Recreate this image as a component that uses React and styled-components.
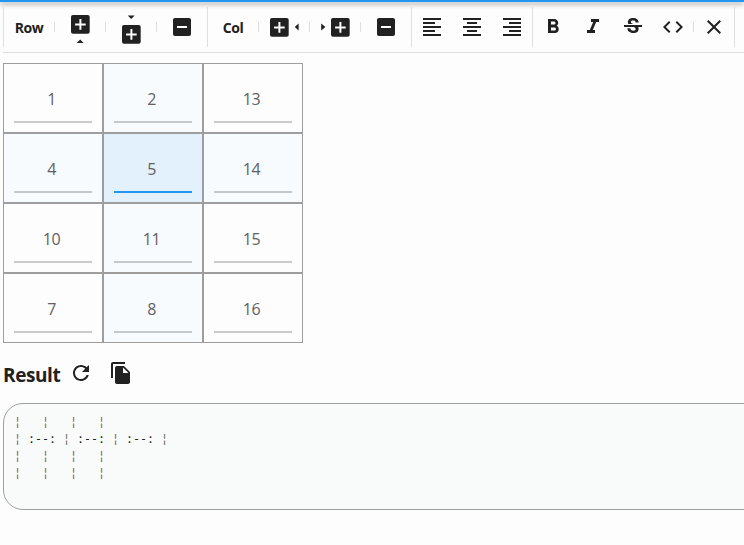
import React from "react";
import styled, { createGlobalStyle } from "styled-components";

const GlobalStyle = createGlobalStyle`
  * { box-sizing: border-box; }
  body {
    margin: 0;
    background: #fdfdfd;
    color: #212121;
    font-family: "Open Sans", "Noto Sans", sans-serif;
    overflow: hidden;
  }
`;

const Page = styled.div`
  height: 545px;
  overflow: hidden;
`;

const TopBar = styled.div`
  height: 2px;
  background: #2196f3;
  box-shadow: 0 2px 5px rgba(0, 0, 0, 0.5);
`;

const Toolbar = styled.div`
  display: flex;
  height: 51px;
  margin-left: 3px;
  padding-top: 5px;
  border-bottom: 1px solid #dedede;
`;

const Group = styled.div`
  display: flex;
  align-items: center;
  height: 40px;
  border-left: 1px solid #dedede;

  &:last-child {
    border-right: 1px solid #dedede;
  }
`;

const Label = styled.div`
  width: 50px;
  text-align: center;
  font-size: 14px;
  font-weight: 700;
  line-height: 40px;
  padding-top: 2px;
  letter-spacing: -0.4px;
`;

const Divider = styled.div`
  width: 1px;
  height: 10px;
  background: #dedede;
`;

const ToolButton = styled.button`
  display: flex;
  align-items: center;
  justify-content: center;
  width: ${(p) => p.$width || 40}px;
  height: 40px;
  padding: 0;
  border: 0;
  background: transparent;
  color: #212121;
`;

const Svg = styled.svg`
  display: block;
  flex: none;
  fill: currentColor;
`;

const Table = styled.div`
  display: grid;
  grid-template-columns: repeat(3, 100px);
  grid-auto-rows: 70px;
  margin: 10px 0 0 3px;
`;

const backgrounds = { none: "#fdfdfd", line: "#f7fbfe", active: "#e3f1fc" };

const Cell = styled.div`
  padding: 10px;
  border: 1px solid #9e9e9e;
  background: ${(p) => backgrounds[p.$tone]};
`;

const CellValue = styled.div`
  height: 49px;
  padding-right: 3px;
  border-bottom: 2px solid ${(p) => (p.$active ? "#2196f3" : "rgba(0, 0, 0, 0.2)")};
  color: #616161;
  font-size: 16px;
  letter-spacing: -0.5px;
  line-height: 50px;
  text-align: center;
`;

const ResultHeader = styled.div`
  display: flex;
  align-items: center;
  height: 40px;
  margin: 10px 0 0 3px;
`;

const Title = styled.h2`
  width: 58px;
  margin: 0;
  padding-top: 4px;
  font-size: 19px;
  font-weight: 700;
  line-height: 40px;
  letter-spacing: -0.4px;
`;

const Output = styled.pre`
  width: 800px;
  height: 107px;
  margin: 10px 0 0 3px;
  padding: 10px;
  border: 1px solid #9e9e9e;
  border-radius: 20px;
  background: #f9fbfa;
  font-family: "DejaVu Sans Mono", monospace;
  font-size: 11.63px;
  line-height: 17px;
`;

const Pipe = styled.span`
  color: #666;
`;

const paths = {
  left: "M15 15H3v2h12v-2zm0-8H3v2h12V7zM3 13h18v-2H3v2zm0 8h18v-2H3v2zM3 3v2h18V3H3z",
  center: "M7 15v2h10v-2H7zm-4 6h18v-2H3v2zm0-8h18v-2H3v2zm4-6v2h10V7H7zM3 3v2h18V3H3z",
  right: "M3 21h18v-2H3v2zm6-4h12v-2H9v2zm-6-4h18v-2H3v2zm6-4h12V7H9v2zM3 3v2h18V3H3z",
  bold: "M15.6 10.79c.97-.67 1.65-1.77 1.65-2.79 0-2.26-1.75-4-4-4H7v14h7.04c2.09 0 3.71-1.7 3.71-3.79 0-1.52-.86-2.82-2.15-3.42zM10 6.5h3c.83 0 1.5.67 1.5 1.5s-.67 1.5-1.5 1.5h-3v-3zm3.5 9H10v-3h3.5c.83 0 1.5.67 1.5 1.5s-.67 1.5-1.5 1.5z",
  italic: "M10 4v3h2.21l-3.42 8H6v3h8v-3h-2.21l3.42-8H18V4z",
  strike: "M7.24 8.75c-.26-.48-.39-1.03-.39-1.67 0-.61.13-1.16.4-1.67.26-.5.63-.93 1.11-1.29.48-.35 1.05-.63 1.7-.83.66-.19 1.39-.29 2.18-.29.81 0 1.54.11 2.21.34.66.22 1.23.54 1.69.94.47.4.83.88 1.08 1.43s.38 1.15.38 1.81h-3.01c0-.31-.05-.59-.15-.85-.09-.27-.24-.49-.44-.68-.2-.19-.45-.33-.75-.44-.3-.1-.66-.16-1.06-.16-.39 0-.74.04-1.03.13s-.53.21-.72.36c-.19.16-.34.34-.44.55-.1.21-.15.43-.15.66 0 .48.25.88.74 1.21.38.25.77.48 1.41.7H7.39c-.05-.08-.11-.17-.15-.25zM21 12v-2H3v2h9.62c.18.07.4.14.55.2.37.17.66.34.87.51s.35.36.43.57c.07.2.11.43.11.69 0 .23-.05.45-.14.66-.09.2-.23.38-.42.53-.19.15-.42.26-.71.35-.29.08-.63.13-1.01.13-.43 0-.83-.04-1.18-.13s-.66-.23-.91-.42c-.25-.19-.45-.44-.59-.75s-.25-.76-.25-1.21H6.4c0 .55.08 1.13.24 1.58s.37.85.65 1.21c.28.35.6.66.98.92.37.26.78.48 1.22.65.44.17.9.3 1.38.39.48.08.96.13 1.44.13.8 0 1.53-.09 2.18-.28s1.21-.45 1.67-.79c.46-.34.82-.77 1.07-1.27s.38-1.07.38-1.71c0-.6-.1-1.14-.31-1.61-.05-.11-.11-.23-.17-.33H21z",
  code: "M9.4 16.6L4.8 12l4.6-4.6L8 6l-6 6 6 6 1.4-1.4zm5.2 0l4.6-4.6-4.6-4.6L16 6l6 6-6 6-1.4-1.4z",
  close: "M19 6.41L17.59 5 12 10.59 6.41 5 5 6.41 10.59 12 5 17.59 6.41 19 12 13.41 17.59 19 19 17.59 13.41 12z",
  remove: "M19 3H5c-1.11 0-2 .9-2 2v14c0 1.1.89 2 2 2h14c1.1 0 2-.9 2-2V5c0-1.1-.9-2-2-2zm-2 10H7v-2h10v2z",
  refresh: "M17.65 6.35C16.2 4.9 14.21 4 12 4c-4.42 0-7.99 3.58-7.99 8s3.57 8 7.99 8c3.73 0 6.84-2.55 7.73-6h-2.08c-.82 2.33-3.04 4-5.65 4-3.31 0-6-2.69-6-6s2.69-6 6-6c1.66 0 3.14.69 4.22 1.78L13 11h7V4l-2.35 2.35z",
  copy: "M16 1H4c-1.1 0-2 .9-2 2v14h2V3h12V1zm-1 4l6 6v10c0 1.1-.9 2-2 2H7.99C6.89 23 6 22.1 6 21l.01-14c0-1.1.89-2 1.99-2h7zm-1 7h5.5L14 6.5V12z",
};

const Icon = ({ name }) => (
  <Svg width="24" height="24" viewBox="0 0 24 24">
    <path d={paths[name]} />
  </Svg>
);

// Position of the plus box and its arrow inside a 50x40 button.
const insertions = {
  above: { x: 16, y: 8, arrow: "M21.8 36L25.2 32.4L28.6 36Z" },
  below: { x: 16, y: 18, arrow: "M21.8 8.4H28.6L25.2 12Z" },
  before: { x: 11, y: 11, arrow: "M39.6 16.6V23.6L35.8 20.1Z" },
  after: { x: 21, y: 11, arrow: "M11.2 16.6V23.6L15.4 20.1Z" },
};

const InsertIcon = ({ place }) => {
  const { x, y, arrow } = insertions[place];
  return (
    <Svg width="50" height="40" viewBox="0 0 50 40">
      <rect x={x} y={y} width="18.7" height="18.7" rx="2" />
      <path
        d={`M${x + 4.1} ${y + 9.4}h10.6M${x + 9.4} ${y + 4.1}v10.6`}
        stroke="#fdfdfd"
        strokeWidth="2"
      />
      <path d={arrow} />
    </Svg>
  );
};

const Tool = ({ name, width }) => (
  <ToolButton $width={width} aria-label={name}>
    <Icon name={name} />
  </ToolButton>
);

const Insert = ({ place }) => (
  <ToolButton $width={50} aria-label={`insert ${place}`}>
    <InsertIcon place={place} />
  </ToolButton>
);

const LineGroup = ({ label, places }) => (
  <Group>
    <Label>{label}</Label>
    {places.map((place) => (
      <React.Fragment key={place}>
        <Divider />
        <Insert place={place} />
      </React.Fragment>
    ))}
    <Divider />
    <Tool name="remove" width={50} />
  </Group>
);

const rows = [
  [1, 2, 13],
  [4, 5, 14],
  [10, 11, 15],
  [7, 8, 16],
];
const active = { row: 1, col: 1 };

const toneOf = (r, c) => {
  if (r === active.row && c === active.col) return "active";
  return r === active.row || c === active.col ? "line" : "none";
};

const output = [
  "¦   ¦   ¦   ¦",
  "¦ :--: ¦ :--: ¦ :--: ¦",
  "¦   ¦   ¦   ¦",
  "¦   ¦   ¦   ¦",
].join("\n");

export default function App() {
  return (
    <Page>
      <GlobalStyle />
      <TopBar />
      <Toolbar>
        <LineGroup label="Row" places={["above", "below"]} />
        <LineGroup label="Col" places={["before", "after"]} />
        <Group>
          <Tool name="left" />
          <Tool name="center" />
          <Tool name="right" />
        </Group>
        <Group>
          <Tool name="bold" />
          <Tool name="italic" />
          <Tool name="strike" />
          <Tool name="code" />
          <Divider />
          <Tool name="close" />
        </Group>
      </Toolbar>
      <Table>
        {rows.map((row, r) =>
          row.map((value, c) => {
            const tone = toneOf(r, c);
            return (
              <Cell key={`${r}-${c}`} $tone={tone}>
                <CellValue $active={tone === "active"}>{value}</CellValue>
              </Cell>
            );
          })
        )}
      </Table>
      <ResultHeader>
        <Title>Result</Title>
        <Tool name="refresh" />
        <Tool name="copy" />
      </ResultHeader>
      <Output>
        {output
          .split(/(¦)/)
          .map((part, i) => (part === "¦" ? <Pipe key={i}>{part}</Pipe> : part))}
      </Output>
    </Page>
  );
}
